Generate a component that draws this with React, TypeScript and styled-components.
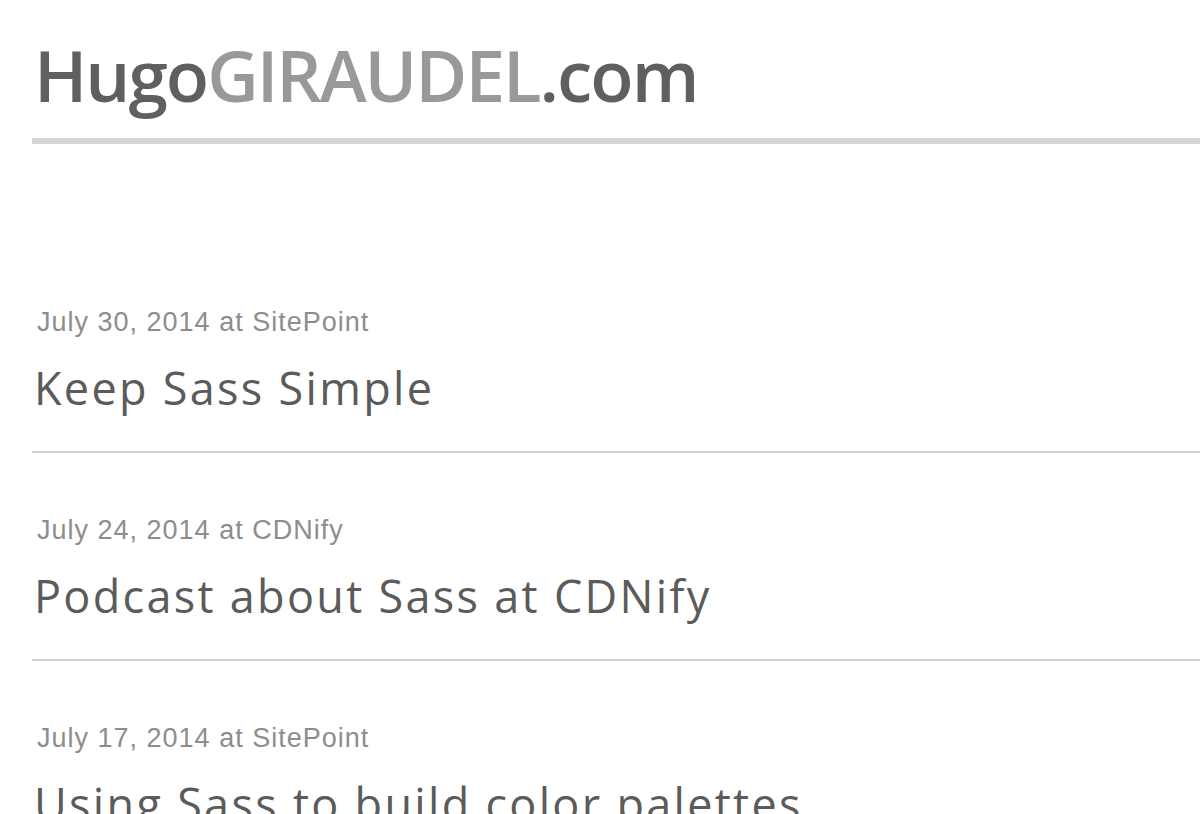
import React from "react";
import styled, { createGlobalStyle } from "styled-components";

const Global = createGlobalStyle`
  html, body { margin: 0; padding: 0; background: #ffffff; overflow: hidden; }
  body { width: 1200px; height: 814px; }
`;

const Page = styled.div`
  padding-left: 32px;
  width: 1168px;
`;

const Header = styled.header`
  border-bottom: 6px solid #d6d6d6;
  padding-top: 31px;
  padding-bottom: 19px;
`;

const Logo = styled.h1`
  margin: 0;
  padding-left: 2px;
  font-family: "Open Sans", sans-serif;
  font-weight: 600;
  font-size: 71px;
  line-height: 88px;
  color: #5f5f5f;
  letter-spacing: -2px;
`;

const LogoLight = styled.span`
  color: #999999;
`;

const List = styled.main`
  padding-top: 163px;
`;

const Post = styled.article`
  border-bottom: 2px solid #d2d2d2;
  padding-bottom: 35px;
  margin-bottom: 62px;
`;

const Meta = styled.p`
  margin: 0;
  padding-left: 5px;
  font-family: "Liberation Sans", Arial, sans-serif;
  font-size: 27px;
  line-height: 30px;
  letter-spacing: 1px;
  color: #8d8d8d;
`;

const Title = styled.h2`
  margin: 23px 0 0;
  padding-left: 2px;
  font-family: "Open Sans", sans-serif;
  font-weight: 400;
  font-size: 45px;
  line-height: 56px;
  letter-spacing: 2.3px;
  color: #5b5b5b;
`;

const posts = [
  { date: "July 30, 2014", where: "SitePoint", title: "Keep Sass Simple" },
  { date: "July 24, 2014", where: "CDNify", title: "Podcast about Sass at CDNify" },
  { date: "July 17, 2014", where: "SitePoint", title: "Using Sass to build color palettes" },
];

export default function App() {
  return (
    <>
      <Global />
      <Page>
        <Header>
          <Logo>
            Hugo<LogoLight>GIRAUDEL</LogoLight>.com
          </Logo>
        </Header>
        <List>
          {posts.map((p) => (
            <Post key={p.title}>
              <Meta>
                {p.date} at {p.where}
              </Meta>
              <Title>{p.title}</Title>
            </Post>
          ))}
        </List>
      </Page>
    </>
  );
}
